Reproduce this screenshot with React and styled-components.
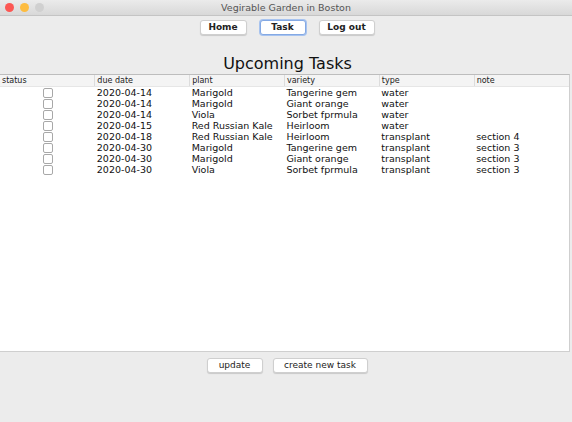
import React, { useState } from "react";
import styled, { createGlobalStyle } from "styled-components";

const GlobalStyle = createGlobalStyle`
  html, body {
    margin: 0;
    padding: 0;
    background: #ececec;
    font-family: "DejaVu Sans", "Liberation Sans", sans-serif;
  }
`;

const Window = styled.div`
  width: 572px;
  height: 422px;
  display: flex;
  flex-direction: column;
  background: #ececec;
  overflow: hidden;
`;

const TitleBar = styled.div`
  height: 15px;
  position: relative;
  display: flex;
  align-items: center;
  justify-content: center;
  background: linear-gradient(#ebebeb, #d8d8d8);
  border-bottom: 1px solid #c4c4c4;
  font-size: 9.5px;
  color: #555;
`;

const Lights = styled.div`
  position: absolute;
  left: 5px;
  top: 3px;
  display: flex;
  gap: 6px;
`;

const Light = styled.span`
  width: 9px;
  height: 9px;
  border-radius: 50%;
  background: ${(p) => p.color};
`;

const Nav = styled.div`
  display: flex;
  justify-content: center;
  gap: 13px;
  padding-top: 4px;
  padding-left: 2px;
`;

const Button = styled.button`
  height: 15px;
  padding: 0;
  width: ${(p) => p.w}px;
  font-family: "DejaVu Sans", sans-serif;
  font-size: 9px;
  font-weight: ${(p) => (p.bold ? "bold" : "normal")};
  color: #222;
  background: #fff;
  border: 1px solid ${(p) => (p.active ? "#84a9e4" : "#cfcfcf")};
  box-shadow: ${(p) =>
    p.active ? "0 0 0 1px #a7c3ef" : "0 1px 1px rgba(0,0,0,0.15)"};
  border-radius: 3px;
  line-height: 13px;
`;

const Heading = styled.h1`
  margin: 19px 0 0 0;
  font-size: 16px;
  font-weight: normal;
  line-height: 20px;
  color: #111;
  text-align: center;
  padding-left: 3px;
`;

const TableArea = styled.div`
  height: 276px;
  background: #fff;
  border-top: 1px solid #bdbdbd;
  border-bottom: 1px solid #cfcfcf;
  border-right: 1px solid #cfcfcf;
  width: 569px;
`;

const Table = styled.table`
  width: 100%;
  border-collapse: collapse;
  table-layout: fixed;
  font-size: 9.5px;
`;

const Th = styled.th`
  height: 11px;
  padding: 0 0 0 2px;
  text-align: left;
  font-weight: normal;
  font-size: 8px;
  color: #222;
  background: #f4f4f4;
  border-left: ${(p) => (p.first ? "none" : "1px solid #dcdcdc")};
  border-bottom: 1px solid #e6e6e6;
`;

const Row = styled.tr`
  height: 11px;
`;

const Td = styled.td`
  height: 11px;
  padding: 0 0 0 2px;
  line-height: 11px;
  color: #111;
  white-space: nowrap;
  overflow: hidden;
`;

const Check = styled.span`
  display: block;
  box-sizing: border-box;
  margin: 0 auto;
  width: 10px;
  height: 10px;
  border: 1px solid #a8a8a8;
  border-radius: 2px;
  background: ${(p) => (p.on ? "#4a90e2" : "#fff")};
  cursor: pointer;
`;

const Footer = styled.div`
  display: flex;
  justify-content: center;
  gap: 10px;
  padding-top: 6px;
  padding-left: 2px;
`;

const tasks = [
  ["2020-04-14", "Marigold", "Tangerine gem", "water", ""],
  ["2020-04-14", "Marigold", "Giant orange", "water", ""],
  ["2020-04-14", "Viola", "Sorbet fprmula", "water", ""],
  ["2020-04-15", "Red Russian Kale", "Heirloom", "water", ""],
  ["2020-04-18", "Red Russian Kale", "Heirloom", "transplant", "section 4"],
  ["2020-04-30", "Marigold", "Tangerine gem", "transplant", "section 3"],
  ["2020-04-30", "Marigold", "Giant orange", "transplant", "section 3"],
  ["2020-04-30", "Viola", "Sorbet fprmula", "transplant", "section 3"],
];

const columns = ["status", "due date", "plant", "variety", "type", "note"];

const App = () => {
  const [done, setDone] = useState(tasks.map(() => false));

  const toggle = (i) => {
    setDone((d) => d.map((v, j) => (j === i ? !v : v)));
  };

  return (
    <Window>
      <GlobalStyle />
      <TitleBar>
        <Lights>
          <Light color="#fc5753" />
          <Light color="#fdbc40" />
          <Light color="#d0d0d0" />
        </Lights>
        Vegirable Garden in Boston
      </TitleBar>
      <Nav>
        <Button w={47} bold>Home</Button>
        <Button w={46} bold active>Task</Button>
        <Button w={56} bold>Log out</Button>
      </Nav>
      <Heading>Upcoming Tasks</Heading>
      <TableArea>
        <Table>
          <thead>
            <tr>
              {columns.map((c, i) => (
                <Th key={c} first={i === 0}>{c}</Th>
              ))}
            </tr>
          </thead>
          <tbody>
            {tasks.map((t, i) => (
              <Row key={i}>
                <Td>
                  <Check on={done[i]} onClick={() => toggle(i)} />
                </Td>
                {t.map((v, j) => (
                  <Td key={j}>{v}</Td>
                ))}
              </Row>
            ))}
          </tbody>
        </Table>
      </TableArea>
      <Footer>
        <Button w={56}>update</Button>
        <Button w={95}>create new task</Button>
      </Footer>
    </Window>
  );
};

export default App;
